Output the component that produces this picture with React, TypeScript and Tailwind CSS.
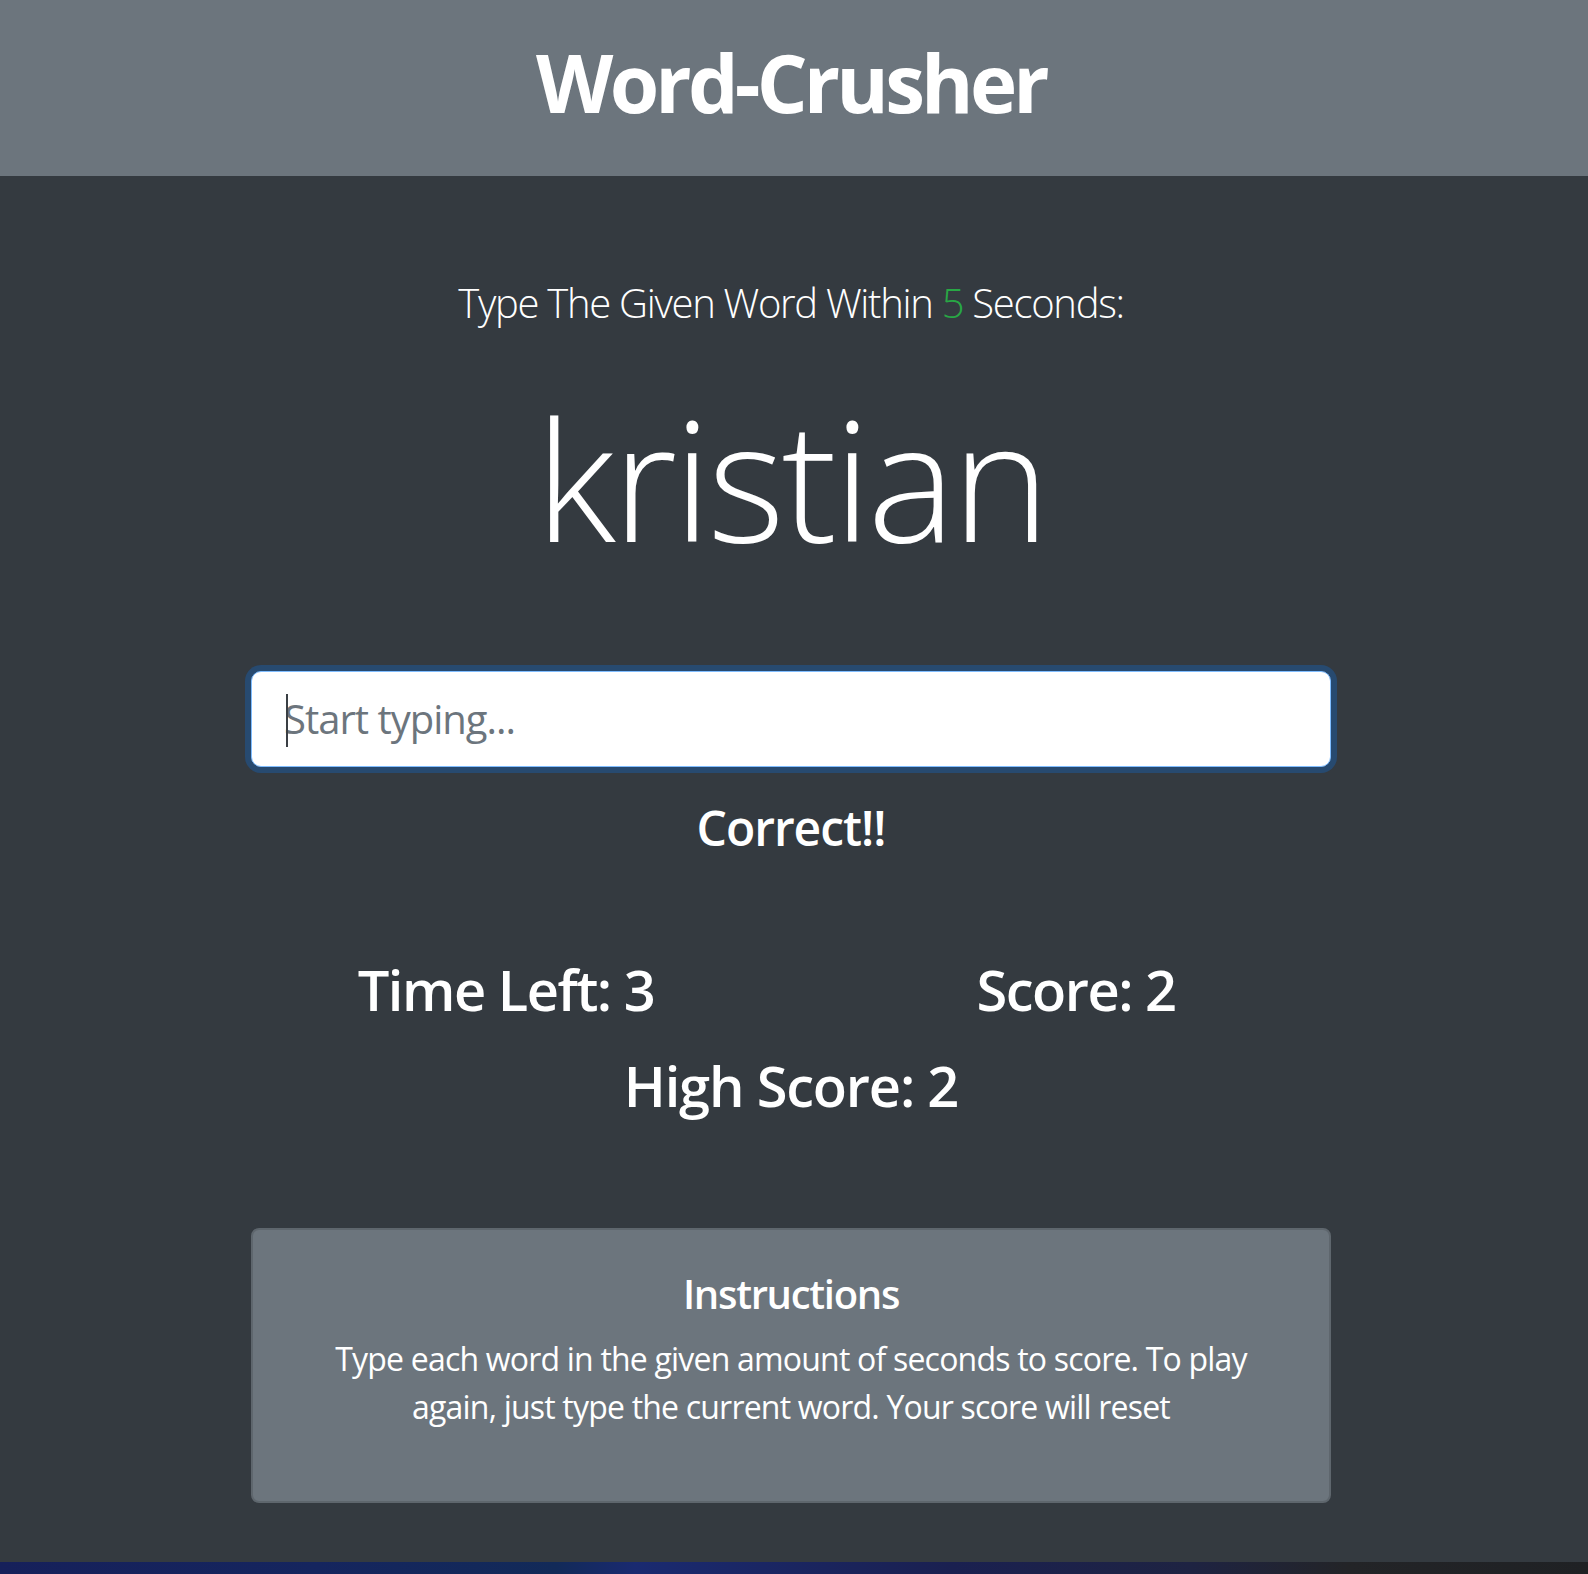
import React from "react";

export default function App() {
  return (
    <div className="w-[1588px] h-[1574px] flex flex-col bg-[#343a40] font-['Open_Sans',sans-serif] text-white overflow-hidden">
      <div className="h-[176px] bg-[#6c757d] pr-[6px] pt-[42px]">
        <h1 className="text-center text-[80px] leading-[80px] font-bold tracking-[-3.8px]">Word-Crusher</h1>
      </div>
      <div className="flex-1 pr-[6px] flex flex-col items-center">
        <p className="mt-[107px] text-[40px] leading-[40px] font-light tracking-[-1.3px]">
          Type The Given Word Within <span className="text-[#28a745]">5</span> Seconds:
        </p>
        <div className="mt-[72px] text-[166px] leading-[166px] font-light tracking-[-3.5px]">kristian</div>
        <div className="mt-[110px] relative w-[1080px] h-[96px] rounded-[10px] bg-white border border-[#80bdff] shadow-[0_0_0_6px_#274a70] flex items-center px-[32px]">
          <input
            className="w-full bg-transparent outline-none text-[40px] text-[#495057] placeholder:text-[#6c757d] tracking-[-1px] font-['Open_Sans',sans-serif]"
            placeholder="Start typing..."
          />
          <div className="absolute left-[34px] top-[22px] w-[2px] h-[53px] bg-[#3a3f44]" />
        </div>
        <div className="mt-[37px] text-[48px] leading-[48px] font-semibold tracking-[-1px]">Correct!!</div>
        <div className="mt-[109px] w-[1140px] grid grid-cols-2 text-center text-[56px] leading-[56px] font-semibold tracking-[-1.5px]">
          <div>Time Left: 3</div>
          <div>Score: 2</div>
        </div>
        <div className="mt-[40px] text-[56px] leading-[56px] font-semibold tracking-[-1.2px]">High Score: 2</div>
        <div className="mt-[115px] w-[1080px] h-[275px] rounded-[8px] bg-[#6c757d] border-2 border-[#5e666d] flex flex-col items-center pt-[44px]">
          <div className="text-[40px] leading-[40px] font-semibold tracking-[-1.3px]">Instructions</div>
          <p className="mt-[21px] text-center text-[32px] leading-[48px] tracking-[-0.8px]">
            Type each word in the given amount of seconds to score. To play
            <br />
            again, just type the current word. Your score will reset
          </p>
        </div>
      </div>
      <div className="h-[12px] bg-[linear-gradient(90deg,#16205a_0%,#15255e_20%,#122a58_35%,#1a2a70_40%,#1a2050_60%,#1e2342_75%,#232427_85%,#1f2124_100%)]" />
    </div>
  );
}
